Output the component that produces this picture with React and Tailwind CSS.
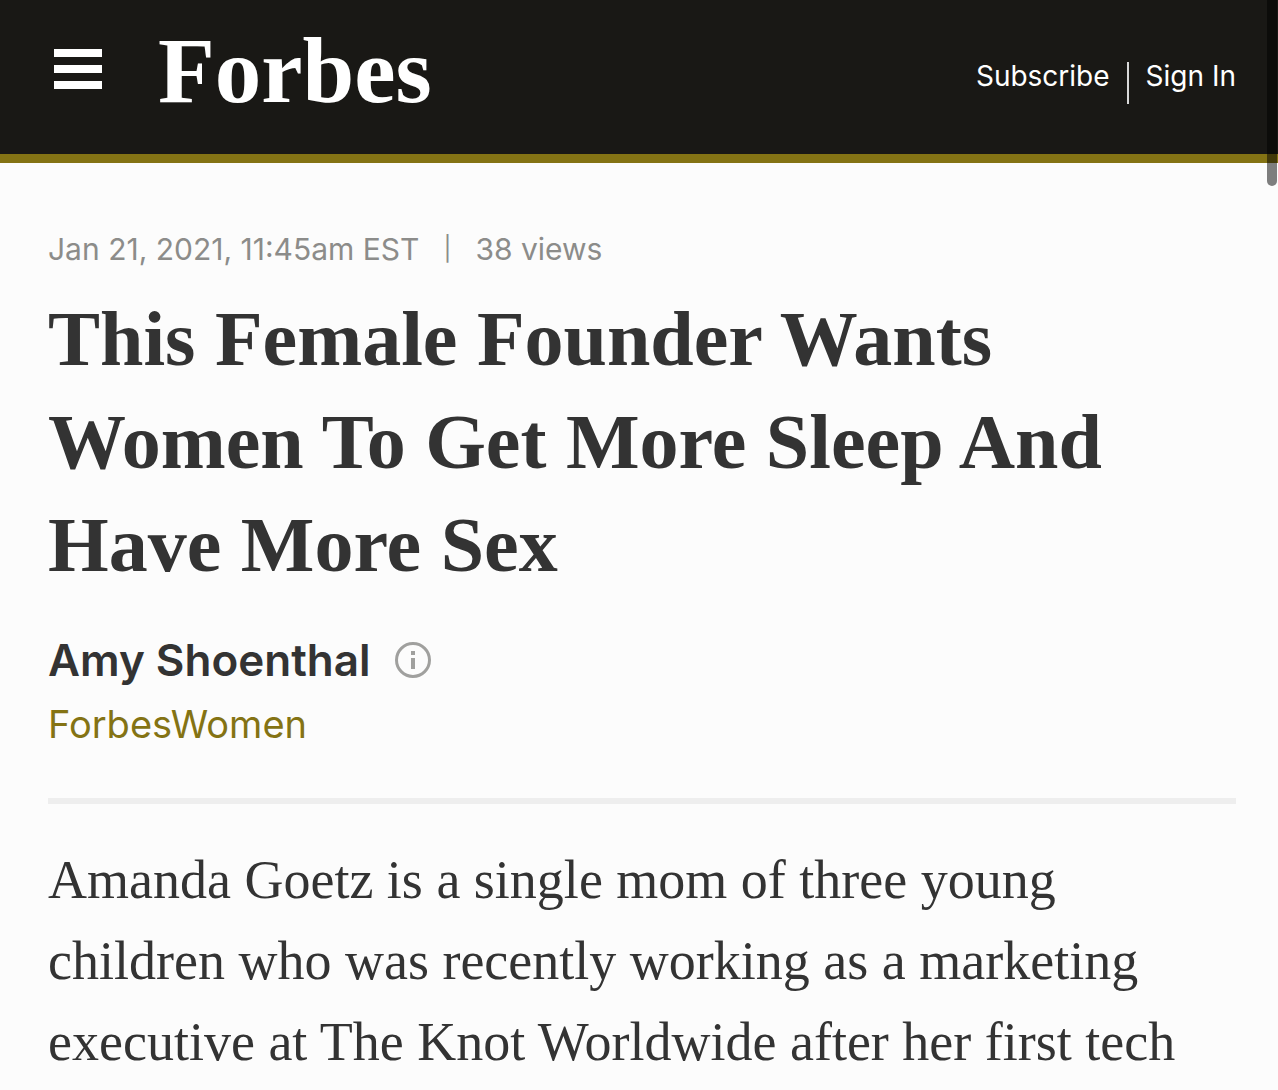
const ARTICLE = {
    date: 'Jan 21, 2021, 11:45am EST',
    views: '38 views',
    title: 'This Female Founder Wants Women To Get More Sleep And Have More Sex',
    author: 'Amy Shoenthal',
    channel: 'ForbesWomen',
    body: 'Amanda Goetz is a single mom of three young children who was recently working as a marketing executive at The Knot Worldwide after her first tech',
};

function Header() {
    return (
        <header className="flex h-[163px] items-start justify-between border-b-[9px] border-[#847314] bg-[#191815] pl-[54px] pr-[42px] text-white">
            <div className="flex items-start">
                <button type="button" aria-label="Open menu" className="mt-[49px] flex w-12 flex-col gap-2">
                    <span className="h-2 w-full bg-white" />
                    <span className="h-2 w-full bg-white" />
                    <span className="h-2 w-full bg-white" />
                </button>
                <a href="#" className="ml-14 mt-[21px] font-['Liberation_Serif',serif] text-[93px] font-bold leading-[100px]">Forbes</a>
            </div>
            <nav className="mt-[62px] flex items-start font-['Inter',sans-serif] text-[28px] leading-7">
                <a href="#">Subscribe</a>
                <span className="mx-[17px] h-[42px] w-[2px] bg-[#d8d8d8]" />
                <a href="#">Sign In</a>
            </nav>
        </header>
    );
}

function InfoIcon() {
    return (
        <svg viewBox="0 0 36 36" className="h-9 w-9" fill="none" aria-hidden="true">
            <circle cx="18" cy="18" r="16.5" stroke="#a0a09e" strokeWidth="3" />
            <rect x="16" y="9" width="4" height="4" fill="#a0a09e" />
            <rect x="16" y="16" width="4" height="11" fill="#a0a09e" />
        </svg>
    );
}

export default function App() {
    return (
        <div className="relative min-h-screen bg-[#fcfcfc] text-[#333333]">
            <Header />

            <main className="pl-12 pr-[42px] pt-[68px]">
                <div className="flex items-center font-['Inter',sans-serif] text-[30px] leading-9 text-[#8c8c8a]">
                    <time dateTime="2021-01-21T11:45">{ARTICLE.date}</time>
                    <span className="mx-6 text-[24px]">|</span>
                    <span>{ARTICLE.views}</span>
                </div>

                <h1 className="mt-5 font-['Liberation_Serif',serif] text-[78px] font-bold leading-[103px]">{ARTICLE.title}</h1>

                <div className="mt-9 flex items-center font-['Inter',sans-serif] text-[44px] font-semibold leading-[56px]">
                    <a href="#">{ARTICLE.author}</a>
                    <button type="button" aria-label="About the author" className="ml-6"><InfoIcon /></button>
                </div>
                <a href="#" className="mt-3 block font-['Inter',sans-serif] text-[38px] leading-[48px] text-[#847314]">{ARTICLE.channel}</a>

                <hr className="mt-[50px] border-t-[6px] border-[#eeeeee]" />

                <p className="mt-9 font-['Liberation_Serif',serif] text-[54px] leading-[81px]">{ARTICLE.body}</p>
            </main>

            {/* Scrollbar thumb, floats over the page */}
            <div className="absolute right-px top-0 h-[186px] w-[10px] rounded-b-full bg-black/50" />
        </div>
    );
}
